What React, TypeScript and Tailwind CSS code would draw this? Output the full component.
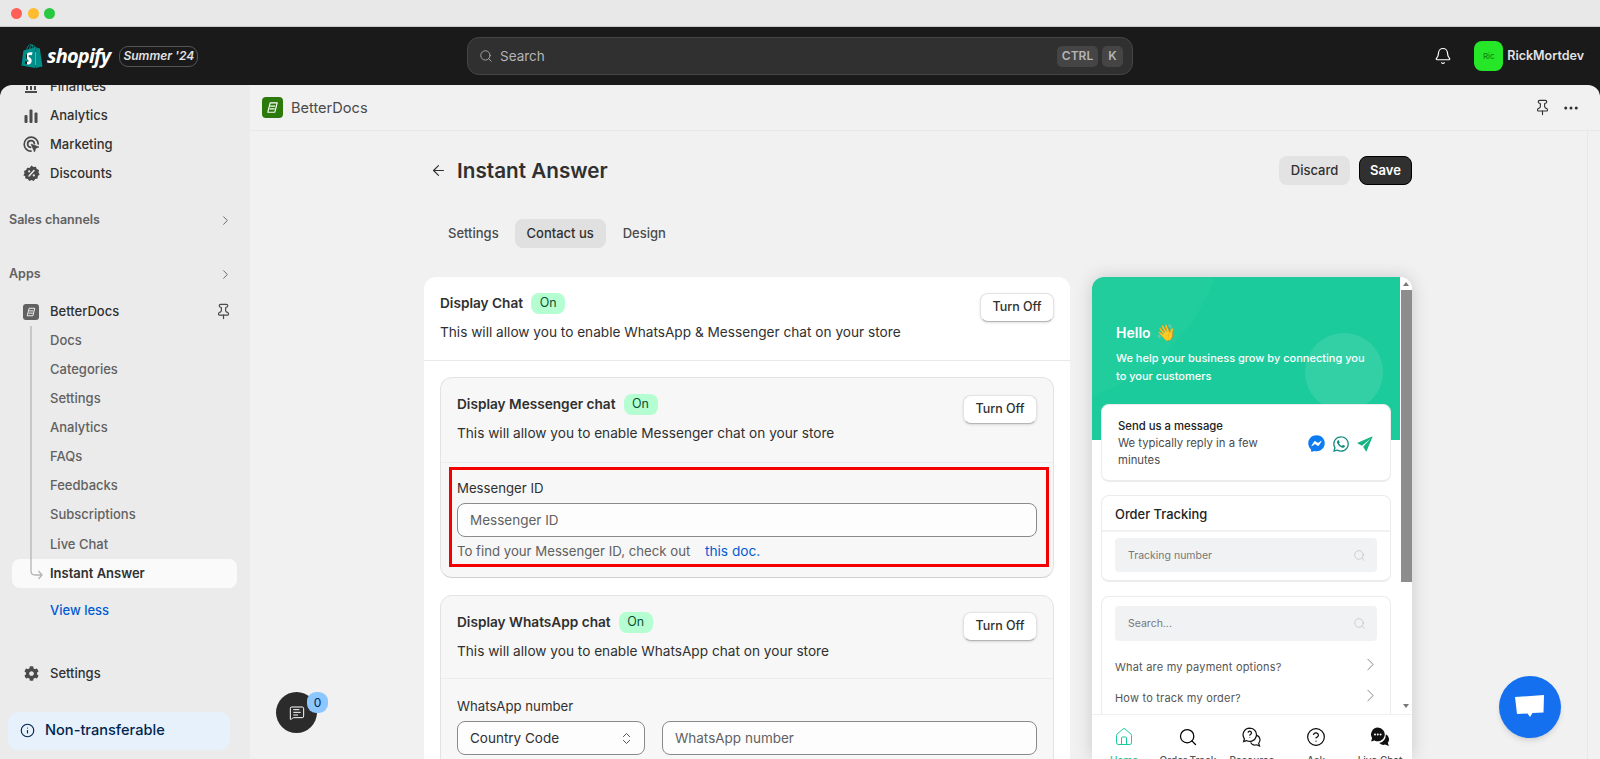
import {
  ArrowLeft,
  Bell,
  ChevronRight,
  ChevronsUpDown,
  CircleHelp,
  Ellipsis,
  House,
  Info,
  MessageSquareText,
  Pin,
  Search,
} from "lucide-react";
import { FaCog, FaFacebookMessenger, FaWhatsapp } from "react-icons/fa";
import { SiShopify } from "react-icons/si";
import { IoIosSend } from "react-icons/io";

const mainLinks = [
  { label: "Finances", icon: <FinancesIcon /> },
  { label: "Analytics", icon: <AnalyticsIcon /> },
  { label: "Marketing", icon: <MarketingIcon /> },
  { label: "Discounts", icon: <DiscountsIcon /> },
];

const subLinks = ["Docs", "Categories", "Settings", "Analytics", "FAQs", "Feedbacks", "Subscriptions", "Live Chat"];

function FinancesIcon() {
  return (
    <svg width="16" height="16" viewBox="0 0 16 16" fill="#4a4a4a">
      <path d="M2 14h12v-2H2zM3 11h2V7H3zM7 11h2V7H7zM11 11h2V7h-2zM2 6h12V4.500L8 2 2 4.500z" />
    </svg>
  );
}

function AnalyticsIcon() {
  return (
    <svg width="16" height="16" viewBox="0 0 16 16" fill="#4a4a4a">
      <rect x="1.500" y="7" width="3" height="8" rx="1" />
      <rect x="6.500" y="1.500" width="3" height="13.500" rx="1" />
      <rect x="11.500" y="4.500" width="3" height="10.500" rx="1" />
    </svg>
  );
}

function MarketingIcon() {
  return (
    <svg width="17" height="17" viewBox="0 0 17 17" fill="none" stroke="#4a4a4a" strokeWidth="1.700">
      <path d="M8 15.200A7 7 0 1 1 15.200 8" strokeLinecap="round" />
      <path d="M7.600 11.400A3.400 3.400 0 1 1 11.400 7.600" strokeLinecap="round" />
      <path d="M8 8l8 3-3.200 1.200L11.500 16z" fill="#4a4a4a" strokeWidth="0.600" />
    </svg>
  );
}

function DiscountsIcon() {
  return (
    <svg width="17" height="17" viewBox="0 0 17 17">
      <path
        fill="#4a4a4a"
        d="M8.500.500l2 1.400 2.400-.200.900 2.300 2.200 1-.500 2.400 1.200 2.100-1.800 1.600-.300 2.400-2.400.500-1.500 1.900-2.200-1-2.200 1-1.500-1.900-2.400-.500-.300-2.400L.300 10.500l1.200-2.100L1 6l2.200-1 .900-2.300 2.400.200z"
      />
      <path d="M6 11l5-5.500" stroke="#ebebeb" strokeWidth="1.500" strokeLinecap="round" />
      <circle cx="6.200" cy="6.400" r="1.100" fill="#ebebeb" />
      <circle cx="10.800" cy="10.400" r="1.100" fill="#ebebeb" />
    </svg>
  );
}

function BetterDocsGlyph({ className }: { className: string }) {
  return (
    <svg className={className} viewBox="0 0 16 16" fill="none" stroke="currentColor" strokeWidth="1.200" strokeLinejoin="round">
      <path d="M5.500 3h7.500l-2.500 10H3z" />
      <path d="M5.500 6.500h5.500M4.800 9.500h5.500" />
    </svg>
  );
}

function Badge() {
  return <span className="flex h-[21px] w-[34px] items-center justify-center rounded-lg bg-[#b4fed2] text-[12.500px] text-[#0c5132]">On</span>;
}

function SectionHead({ title, text, buttonClass = "" }: { title: string; text: string; buttonClass?: string }) {
  return (
    <div className="flex justify-between">
      <div>
        <div className="flex items-center gap-[8px]">
          <span className="text-[13.650px] font-semibold text-[#303030]">{title}</span>
          <Badge />
        </div>
        <p className="mt-[8px] text-[13.650px] leading-[20px] text-[#303030]">{text}</p>
      </div>
      <button
        className={`h-[29px] w-[74px] rounded-lg border border-[#e3e3e3] border-b-[#b5b5b5] bg-white text-[12.500px] font-medium text-[#303030] shadow-sm ${buttonClass}`}
      >
        Turn Off
      </button>
    </div>
  );
}

function Sidebar() {
  return (
    <aside className="relative w-[250px] shrink-0 overflow-hidden rounded-tl-xl bg-[#ebebeb] text-[13px] text-[#303030]">
      <div className="-mt-[13px]">
        {mainLinks.map((link) => (
          <div key={link.label} className="flex h-[29px] items-center font-medium">
            <span className="flex w-[50px] justify-center pl-[20px] pr-[8px]">{link.icon}</span>
            {link.label}
          </div>
        ))}

        <div className="mt-[20px] flex h-[24px] items-center justify-between pl-[9px] pr-[17px] text-[12.500px] font-semibold text-[#616161]">
          Sales channels
          <ChevronRight size={15} strokeWidth={1.500} />
        </div>
        <div className="mt-[30px] flex h-[24px] items-center justify-between pl-[9px] pr-[17px] text-[12.500px] font-semibold text-[#616161]">
          Apps
          <ChevronRight size={15} strokeWidth={1.500} />
        </div>

        <div className="mt-[11px] flex h-[29px] items-center font-medium">
          <span className="flex w-[50px] justify-center pl-[20px] pr-[8px]">
            <span className="flex h-[16px] w-[16px] shrink-0 items-center justify-center rounded-[3px] bg-[#616161] text-white">
              <BetterDocsGlyph className="h-[12px] w-[12px]" />
            </span>
          </span>
          <span className="flex-1">BetterDocs</span>
          <Pin size={17} strokeWidth={1.700} className="mr-[18px] text-[#4a4a4a]" />
        </div>

        <div className="relative">
          <svg className="absolute left-[29px] top-0" width="16" height="260" fill="none" stroke="#b5b5b5" strokeWidth="1.300">
            <path d="M2 0v245q0 4 4 4h7M9.500 245l3.500 4-3.500 4" />
          </svg>
          {subLinks.map((label) => (
            <div key={label} className="flex h-[29.120px] items-center pl-[50px] font-medium text-[#616161]">
              {label}
            </div>
          ))}
          <div className="ml-[12px] flex h-[29px] w-[225px] items-center rounded-lg bg-[#fafafa] pl-[38px] font-semibold text-[#303030]">
            Instant Answer
          </div>
        </div>

        <div className="mt-[8px] flex h-[29px] items-center pl-[50px] font-medium text-[#005bd3]">View less</div>

        <div className="mt-[34px] flex h-[29px] items-center font-medium">
          <span className="flex w-[50px] justify-center pl-[20px] pr-[8px]">
            <FaCog size={15} className="text-[#4a4a4a]" />
          </span>
          Settings
        </div>

        <div className="ml-[8px] mt-[24px] flex h-[38px] w-[222px] items-center gap-[10px] rounded-[10px] bg-[#e6f1fc] pl-[12px] text-[14.600px] font-medium text-[#00254f]">
          <Info size={15} strokeWidth={1.800} />
          Non-transferable
        </div>
      </div>
    </aside>
  );
}

function PreviewCard({ children, className }: { children: React.ReactNode; className: string }) {
  return (
    <div className={`mx-[9px] rounded-lg border border-[#ececec] border-b-2 bg-white ${className}`}>{children}</div>
  );
}

function Preview() {
  return (
    <div className="relative h-[482px] w-[320px] shrink-0 overflow-hidden rounded-t-xl bg-white shadow-[0_0_18px_rgba(0,0,0,0.16)]">
      <div className="flex h-[437px]">
        <div className="w-[308px] overflow-hidden">
          <div className="relative h-[163px] overflow-hidden bg-[#1ccb9b] pl-[24px] pt-[45px] text-white">
            <div className="absolute -left-[255px] -top-[262px] h-[390px] w-[390px] rounded-full bg-white/[0.025]" />
            <div className="absolute left-[213px] top-[56px] h-[78px] w-[78px] rounded-full bg-white/[0.1]" />
            <p className="relative flex h-[20px] items-center gap-[5px] text-[14px] font-semibold">
              Hello <span className="text-[16px] leading-none">👋</span>
            </p>
            <p className="relative mt-[7px] text-[11px] font-medium leading-[18px]">
              We help your business grow by connecting you
              <br />
              to your customers
            </p>
          </div>

          <PreviewCard className="relative -mt-[36px] flex h-[78px] items-center justify-between pl-[16px] pr-[15px]">
            <div className="pt-[2px] text-[11.300px] leading-[17px] text-[#4b4b4b]">
              <p className="font-medium text-[#222]">Send us a message</p>
              <p>
                We typically reply in a few
                <br />
                minutes
              </p>
            </div>
            <div className="flex items-center gap-[7px] pt-[2px]">
              <FaFacebookMessenger size={17} className="text-[#0d7cf2]" />
              <FaWhatsapp size={18} className="text-[#128c7e]" />
              <IoIosSend size={20} className="-ml-[2px] text-[#14b381]" />
            </div>
          </PreviewCard>

          <PreviewCard className="mt-[13px] h-[87px]">
            <div className="flex h-[36px] items-center border-b-2 border-[#f2f2f2] pl-[13px] pt-[3px] text-[12.900px] font-medium text-[#222]">
              Order Tracking
            </div>
            <div className="mx-[13px] mt-[6px] flex h-[34px] items-center justify-between rounded bg-[#f1f2f4] pl-[13px] pr-[11px] pt-[1px] text-[10.500px] text-[#777]">
              Tracking number
              <Search size={13} strokeWidth={1.200} className="text-[#bbb]" />
            </div>
          </PreviewCard>

          <PreviewCard className="mt-[14px] h-[140px]">
            <div className="mx-[13px] mt-[9px] flex h-[35px] items-center justify-between rounded bg-[#f1f2f4] pl-[13px] pr-[11px] text-[10.500px] text-[#777]">
              Search...
              <Search size={13} strokeWidth={1.200} className="text-[#bbb]" />
            </div>
            <div className="mx-[13px] mt-[11px] flex h-[31px] items-center justify-between text-[11px] tracking-[0.2px] text-[#555]">
              What are my payment options?
              <ChevronRight size={21} strokeWidth={1} className="-mr-[4px] -mt-[6px] text-[#777]" />
            </div>
            <div className="mx-[13px] flex h-[31px] items-center justify-between text-[11px] tracking-[0.2px] text-[#555]">
              How to track my order?
              <ChevronRight size={21} strokeWidth={1} className="-mr-[4px] -mt-[6px] text-[#777]" />
            </div>
          </PreviewCard>
        </div>

        <div className="flex h-full w-[12px] flex-col items-center bg-white">
          <div className="mt-[5px] h-0 w-0 border-x-[3px] border-b-[4px] border-x-transparent border-b-[#777]" />
          <div className="mt-[4px] h-[292px] w-[11px] bg-[#8d8d8d]" />
          <div className="mt-[122px] h-0 w-0 border-x-[3px] border-t-[4px] border-x-transparent border-t-[#777]" />
        </div>
      </div>

      <div className="grid h-[45px] grid-cols-5 border-t border-[#efefef] bg-white text-[10px]">
        <NavItem label="Home" active icon={<House size={20} strokeWidth={1.200} className="text-[#1ccb9b]" />} />
        <NavItem label="Order Track" icon={<Search size={20} strokeWidth={1.500} className="text-black" />} />
        <NavItem label="Resource" icon={<ResourceIcon />} />
        <NavItem label="Ask" icon={<CircleHelp size={20} strokeWidth={1.400} className="text-black" />} />
        <NavItem label="Live Chat" icon={<LiveChatIcon />} />
      </div>
    </div>
  );
}

function NavItem({ label, icon, active }: { label: string; icon: React.ReactNode; active?: boolean }) {
  return (
    <div className={`flex flex-col items-center pt-[12px] font-medium ${active ? "text-[#1ccb9b]" : "text-[#555]"}`}>
      {icon}
      <span className="mt-[6px] whitespace-nowrap leading-[14px]">{label}</span>
    </div>
  );
}

function ResourceIcon() {
  return (
    <svg width="20" height="20" viewBox="0 0 18 18" fill="none" stroke="#111" strokeWidth="1.100">
      <path d="M7 1a6 6 0 1 1-3 11.200L1.500 13l.700-2.400A6 6 0 0 1 7 1z" />
      <path d="M5.500 5.200a1.500 1.500 0 1 1 2.200 1.400c-.5.300-.7.600-.7 1.200M7 9.400v.6" />
      <path d="M13.500 7.500a4.500 4.500 0 0 1 1.500 7.200l.8 2.300-2.800-1a4.500 4.500 0 0 1-5.300-2" />
    </svg>
  );
}

function LiveChatIcon() {
  return (
    <svg width="20" height="20" viewBox="0 0 18 18" fill="#111">
      <path d="M7 .500a6.200 6.200 0 1 1-3 11.600L1 13l.900-3A6.200 6.200 0 0 1 7 .500z" />
      <path d="M14.200 6.500a5 5 0 0 1 1.800 7.700l1 2.800-3.400-1.200a5 5 0 0 1-5.300-1.300 7.500 7.500 0 0 0 5.900-8z" />
      <circle cx="4.500" cy="6.800" r=".9" fill="#fff" />
      <circle cx="7" cy="6.800" r=".9" fill="#fff" />
      <circle cx="9.500" cy="6.800" r=".9" fill="#fff" />
    </svg>
  );
}

export default function App() {
  return (
    <div className="relative flex h-[759px] flex-col overflow-hidden bg-[#1a1a1a] font-[Inter,sans-serif]">
      {/* Window bar */}
      <div className="flex h-[27px] shrink-0 items-center gap-[5.500px] border-b border-[#c8c8c8] bg-[#e8e8e8] pl-[11px]">
        <span className="h-[11px] w-[11px] rounded-full bg-[#ff5f57]" />
        <span className="h-[11px] w-[11px] rounded-full bg-[#febc2e]" />
        <span className="h-[11px] w-[11px] rounded-full bg-[#28c840]" />
      </div>

      {/* Top bar */}
      <header className="flex h-[58px] shrink-0 items-center justify-between">
        <div className="flex w-[467px] items-center pl-[20px]">
          <span className="relative flex h-[26px] w-[24px] items-center justify-center">
            <span className="absolute left-[7px] top-[9px] h-[13px] w-[10px] bg-white" />
            <SiShopify size={26} className="relative text-[#008e8a]" />
          </span>
          <span className="ml-[3px] font-['Open_Sans',sans-serif] text-[20px] font-bold italic leading-none tracking-[-0.8px] text-white">
            shopify
          </span>
          <span className="ml-[9px] flex h-[21px] w-[79px] items-center justify-center rounded-[9px] border border-[#555] text-[12px] font-semibold italic text-[#e3e3e3]">
            Summer '24
          </span>
        </div>

        <div className="flex h-[38px] w-[666px] items-center rounded-[12px] border border-[#454545] bg-[#303030] pl-[11px] pr-[9px] text-[13.500px] text-[#b5b5b5]">
          <Search size={14} strokeWidth={1.600} className="text-[#a8a8a8]" />
          <span className="ml-[7px] flex-1">Search</span>
          <span className="flex h-[21px] w-[41px] items-center justify-center rounded-[5px] bg-[#454545] text-[12px] font-semibold">CTRL</span>
          <span className="ml-[4px] flex h-[21px] w-[21px] items-center justify-center rounded-[5px] bg-[#454545] text-[12px] font-semibold">K</span>
        </div>

        <div className="flex w-[467px] items-center justify-end pr-[16px]">
          <Bell size={18} strokeWidth={1.600} className="mr-[22px] text-white" />
          <span className="flex h-[30px] w-[29px] items-center justify-center rounded-[8px] bg-[#26e628] text-[8px] text-[#0a7a10]">Ric</span>
          <span className="ml-[4px] text-[12.500px] font-semibold text-[#e3e3e3]">RickMortdev</span>
        </div>
      </header>

      <div className="flex min-h-0 flex-1">
        <Sidebar />

        <main className="flex min-w-0 flex-1 flex-col rounded-tr-xl bg-[#f1f1f1]">
          <div className="flex h-[46px] shrink-0 items-center border-b border-[#e8e8e8] pl-[12px] pr-[20px]">
            <span className="flex h-[21px] w-[21px] items-center justify-center rounded-[4px] bg-[#2b7a0b] text-white">
              <BetterDocsGlyph className="h-[15px] w-[15px]" />
            </span>
            <span className="ml-[8px] flex-1 pt-[2px] text-[14.600px] text-[#4a4a4a]">BetterDocs</span>
            <Pin size={17} strokeWidth={1.600} className="mr-[11px] text-[#303030]" />
            <Ellipsis size={18} strokeWidth={2} className="text-[#303030]" />
          </div>

          <div className="flex min-h-0 flex-1">
            <div className="min-w-0 flex-1 overflow-hidden pl-[174px]">
              {/* Page title */}
              <div className="mt-[25px] flex h-[29px] w-[988px] items-center justify-between">
                <div className="flex items-center">
                  <ArrowLeft size={17} strokeWidth={1.600} className="ml-[6px] text-[#303030]" />
                  <h1 className="ml-[10px] text-[20.700px] font-semibold text-[#303030]">Instant Answer</h1>
                </div>
                <div className="flex gap-[9px]">
                  <button className="h-[29px] w-[71px] rounded-lg bg-[#e3e3e3] text-[13px] font-medium text-[#303030]">Discard</button>
                  <button className="h-[29px] w-[53px] rounded-lg border border-black bg-[#303030] text-[13px] font-semibold text-white">Save</button>
                </div>
              </div>

              {/* Tabs */}
              <div className="mt-[34px] flex h-[29px] items-center pl-[24px] text-[13px] font-medium text-[#4a4a4a]">
                <span>Settings</span>
                <span className="ml-[16px] flex h-[29px] w-[91px] items-center justify-center rounded-lg bg-[#e0e0e0] text-[#303030]">Contact us</span>
                <span className="ml-[17px]">Design</span>
              </div>

              <div className="mt-[29px] flex w-[988px] items-start gap-[22px]">
                {/* Form card */}
                <section className="w-[646px] rounded-t-xl bg-white">
                  <div className="h-[84px] border-b border-[#e8e8e8] px-[16px] pt-[16px]">
                    <SectionHead title="Display Chat" text="This will allow you to enable WhatsApp & Messenger chat on your store" />
                  </div>

                  <div className="px-[16px] pt-[16px]">
                    <div className="rounded-xl border border-[#e3e3e3] border-b-[#d0d0d0] bg-[#f7f7f7]">
                      <div className="h-[85px] border-b border-[#ececec] px-[16px] pt-[16px]">
                        <SectionHead title="Display Messenger chat" buttonClass="mt-[1px]" text="This will allow you to enable Messenger chat on your store" />
                      </div>
                      <div className="relative h-[114px] px-[16px] pt-[15px]">
                        <div className="absolute bottom-[10px] left-[8px] right-[4px] top-[4px] border-[3px] border-[#f50000]" />
                        <label className="block text-[13.200px] leading-[20px] text-[#303030]">Messenger ID</label>
                        <div className="mt-[5px] flex h-[34px] items-center rounded-lg border border-[#8a8a8a] bg-[#fdfdfd] pl-[12px] text-[13.500px] text-[#616161]">
                          Messenger ID
                        </div>
                        <p className="mt-[4px] text-[13.200px] leading-[20px] text-[#616161]">
                          To find your Messenger ID, check out <span className="ml-[11px] text-[13.700px] text-[#005bd3]">this doc.</span>
                        </p>
                      </div>
                    </div>

                    <div className="mt-[17px] rounded-xl border border-[#e3e3e3] bg-[#f7f7f7]">
                      <div className="h-[83px] border-b border-[#ececec] px-[16px] pt-[16px]">
                        <SectionHead title="Display WhatsApp chat" text="This will allow you to enable WhatsApp chat on your store" />
                      </div>
                      <div className="px-[16px] pb-[20px] pt-[17px]">
                        <label className="block text-[13.200px] leading-[20px] text-[#303030]">WhatsApp number</label>
                        <div className="mt-[5px] flex gap-[17px]">
                          <div className="flex h-[34px] w-[188px] items-center justify-between rounded-lg border border-[#8a8a8a] bg-[#fdfdfd] pl-[12px] pr-[10px] text-[13.500px] text-[#303030]">
                            Country Code
                            <ChevronsUpDown size={15} strokeWidth={1.500} className="text-[#4a4a4a]" />
                          </div>
                          <div className="flex h-[34px] flex-1 items-center rounded-lg border border-[#8a8a8a] bg-[#fdfdfd] pl-[12px] text-[13.500px] text-[#616161]">
                            WhatsApp number
                          </div>
                        </div>
                      </div>
                    </div>
                  </div>
                </section>

                <Preview />
              </div>
            </div>
            <div className="w-[13px] shrink-0 border-l border-[#e8e8e8]" />
          </div>
        </main>
      </div>

      {/* Floating chat buttons */}
      <div className="absolute left-[276px] top-[692px] flex h-[41px] w-[41px] items-center justify-center rounded-full bg-[#2b2b2b] text-white">
        <MessageSquareText size={16} strokeWidth={1.500} />
        <span className="absolute -right-[11px] top-0 flex h-[21px] w-[21px] items-center justify-center rounded-[9px] bg-[#8cc8ff] text-[12px] text-[#00254f]">0</span>
      </div>
      <div className="absolute left-[1499px] top-[676px] flex h-[62px] w-[62px] items-center justify-center rounded-full bg-[#1570ef] shadow-md">
        <svg width="32" height="28" viewBox="0 0 32 28" fill="#fff">
          <path d="M1 4l29-2-.5 17.500-11 .5L16 24l-2.500-3.500-10.500.5z" />
        </svg>
      </div>
    </div>
  );
}
